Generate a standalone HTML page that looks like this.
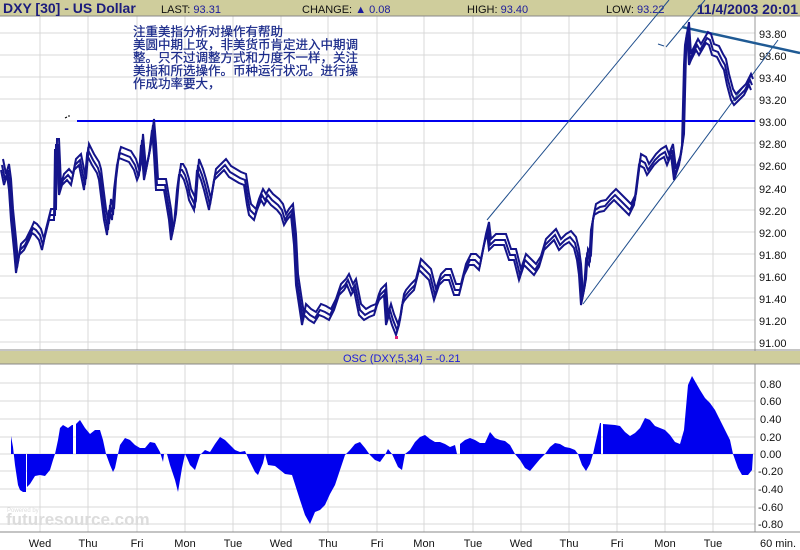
<!DOCTYPE html>
<html><head><meta charset="utf-8"><style>
body{margin:0;width:800px;height:550px;overflow:hidden;background:#fff;font-family:"Liberation Sans",Arial,sans-serif}
svg{display:block}
</style></head><body>
<svg width="800" height="550" xmlns="http://www.w3.org/2000/svg" font-family="Liberation Sans, Arial, sans-serif">
<rect width="800" height="550" fill="#fff"/>
<g stroke="#d8d8d8" stroke-width="1">
<path d="M40 16V350M88 16V350M137 16V350M185 16V350M233 16V350M281 16V350M328 16V350M377 16V350M424 16V350M473 16V350M521 16V350M569 16V350M617 16V350M665 16V350M713 16V350"/>
<path d="M0 33H755M0 55H755M0 77H755M0 99H755M0 121H755M0 143H755M0 165H755M0 188H755M0 210H755M0 232H755M0 254H755M0 276H755M0 298H755M0 320H755M0 342H755"/>
<path d="M40 365V532M88 365V532M137 365V532M185 365V532M233 365V532M281 365V532M328 365V532M377 365V532M424 365V532M473 365V532M521 365V532M569 365V532M617 365V532M665 365V532M713 365V532"/>
<path d="M0 383H755M0 401H755M0 419H755M0 437H755M0 454H755M0 471H755M0 489H755M0 507H755M0 524H755"/>
</g>
<line x1="755" y1="16" x2="755" y2="532" stroke="#999"/>
<rect x="0" y="0" width="800" height="16" fill="#cfcd9c"/>
<line x1="0" y1="16" x2="800" y2="16" stroke="#888"/>
<text x="3" y="13" font-size="14" font-weight="bold" fill="#1c1c7c">DXY [30] - US Dollar</text>
<text x="161" y="13" font-size="11" fill="#111">LAST: <tspan fill="#1c1c9c">93.31</tspan></text>
<text x="302" y="13" font-size="11" fill="#111">CHANGE: <tspan fill="#1c1c9c">▲ 0.08</tspan></text>
<text x="467" y="13" font-size="11" fill="#111">HIGH: <tspan fill="#1c1c9c">93.40</tspan></text>
<text x="606" y="13" font-size="11" fill="#111">LOW: <tspan fill="#1c1c9c">93.22</tspan></text>
<text x="798" y="14" font-size="14" font-weight="bold" fill="#1c1c7c" text-anchor="end">11/4/2003 20:01</text>
<g font-size="11" fill="#111">
<text x="759" y="38">93.80</text><text x="759" y="60">93.60</text><text x="759" y="82">93.40</text><text x="759" y="104">93.20</text><text x="759" y="126">93.00</text><text x="759" y="148">92.80</text><text x="759" y="170">92.60</text><text x="759" y="193">92.40</text><text x="759" y="215">92.20</text><text x="759" y="237">92.00</text><text x="759" y="259">91.80</text><text x="759" y="281">91.60</text><text x="759" y="303">91.40</text><text x="759" y="325">91.20</text><text x="759" y="347">91.00</text>
</g>
<g font-family="Liberation Sans, Noto Sans CJK SC, sans-serif" font-size="12.5" fill="#1a2a8a" stroke="#1a2a8a" stroke-width="0.25">
<text x="133" y="36">注重美指分析对操作有帮助</text>
<text x="133" y="49">美圆中期上攻，非美货币肯定进入中期调</text>
<text x="133" y="62">整。只不过调整方式和力度不一样，关注</text>
<text x="133" y="75">美指和所选操作。币种运行状况。进行操</text>
<text x="133" y="88">作成功率要大，</text>
</g>
<line x1="77" y1="121" x2="755" y2="121" stroke="#0000ee" stroke-width="2"/>
<path d="M65 118l2-1M68 116h2" stroke="#000" stroke-width="1"/>
<g stroke="#1f4e8c" stroke-width="1" fill="none">
<line x1="487" y1="220" x2="669" y2="0"/>
<line x1="583" y1="304" x2="778" y2="40"/>
<line x1="666" y1="47" x2="705" y2="0"/>
<line x1="658" y1="44" x2="664" y2="46"/>
</g>
<line x1="682" y1="27" x2="800" y2="53" stroke="#1f5a94" stroke-width="2.5"/>
<g fill="none" stroke="#14148a">
<polyline id="p" stroke-width="2" points="2,165 5,180 8,170 10,185 12,215 15,245 17,268 20,250 25,245 30,235 33,228 36,230 40,235 43,245 45,235 50,215 55,215 56,145 58,145 60,190 63,180 68,175 72,180 75,165 80,160 85,185 88,150 93,160 98,168 100,175 105,215 108,230 110,205 113,215 115,185 118,160 120,153 125,155 130,157 135,165 138,175 140,170 142,140 145,175 150,150 153,125 155,150 157,185 160,185 165,185 170,215 172,235 175,220 178,185 180,170 182,170 185,175 188,185 190,195 195,205 198,165 202,175 205,185 210,205 215,175 220,170 225,165 230,172 235,175 240,178 245,180 248,200 250,210 255,215 258,205 262,195 265,200 268,195 272,200 278,205 282,210 285,220 288,215 292,210 295,240 297,280 300,300 303,320 305,310 310,315 315,318 320,310 325,312 330,315 335,305 340,290 345,285 348,280 352,290 355,285 360,310 365,315 370,312 375,310 378,300 380,295 385,290 387,320 390,310 393,320 397,330 400,320 403,300 405,296 410,290 415,285 420,265 425,270 430,275 435,295 440,280 445,275 450,275 455,290 460,290 465,270 470,260 475,260 480,265 485,240 488,228 490,245 495,240 500,240 505,240 510,255 515,255 520,275 525,260 530,265 535,270 540,262 545,245 550,240 555,235 560,245 565,240 570,237 575,243 578,255 580,270 582,300 585,285 587,255 590,260 592,225 595,210 600,207 605,206 610,200 615,195 620,200 625,205 630,210 635,200 640,160 645,163 648,170 655,160 660,155 665,152 668,160 672,150 675,175 680,160 683,140 685,60 686,40 688,28 690,60 692,55 697,45 700,50 703,45 707,38 710,40 713,50 718,52 722,60 725,65 728,80 732,95 735,100 740,95 745,90 750,80 752,85"/>
<use href="#p" transform="translate(1,-6)" stroke-width="1.5"/>
<use href="#p" transform="translate(-1,5)" stroke-width="1.5"/>
</g>
<rect x="395" y="336" width="3" height="3" fill="#e0207a"/>
<line x1="0" y1="350" x2="800" y2="350" stroke="#888"/>
<rect x="0" y="351" width="800" height="13" fill="#cfcd9c"/>
<line x1="0" y1="364" x2="800" y2="364" stroke="#888"/>
<text x="343" y="362" font-size="11" fill="#1c1cdc">OSC (DXY,5,34) = -0.21</text>
<polygon fill="#0000ee" points="11,454 11,436 13,447 15,465 18,485 20,490 23,492 26,492 26,454 27,454 27,487 30,484 35,476 40,475 45,476 50,470 53,460 55,454 58,440 60,428 63,425 68,428 72,425 73,425 73,454 76,454 76,424 80,420 85,428 90,434 95,430 100,430 103,440 106,454 110,465 113,472 115,468 118,454 120,445 125,438 130,440 135,445 140,448 145,448 150,442 155,443 160,452 163,462 164,454 167,454 170,465 175,480 178,492 182,468 185,454 187,458 190,465 195,470 200,455 205,450 210,452 215,444 220,437 225,440 235,450 240,452 245,451 250,462 255,472 258,475 263,463 265,454 268,465 275,466 285,474 292,475 300,500 305,515 310,524 315,512 320,510 325,505 330,494 335,485 340,470 345,455 350,450 355,444 360,442 365,448 370,455 375,460 380,462 385,455 388,449 392,454 398,467 402,470 405,454 410,450 415,442 420,437 425,435 430,439 435,442 440,442 445,444 450,447 455,445 457,454 460,454 460,444 465,440 470,438 475,440 480,443 485,443 490,432 495,438 500,440 505,441 510,445 515,454 520,460 525,468 530,471 535,465 540,459 545,454 550,447 555,443 560,444 565,447 570,448 575,450 578,454 582,465 586,471 590,464 593,454 595,445 598,432 600,423 601,423 601,454 603,454 603,424 615,425 620,426 625,432 630,436 635,433 640,428 645,418 650,420 655,426 660,428 665,430 670,435 675,442 680,444 684,430 688,385 692,376 696,383 700,390 705,398 710,403 715,410 720,420 725,430 730,440 733,454 738,468 742,475 748,475 752,470 753,454"/>
<g font-size="11" fill="#111">
<text x="760" y="388">0.80</text><text x="760" y="405">0.60</text><text x="760" y="423">0.40</text><text x="760" y="441">0.20</text><text x="760" y="458">0.00</text><text x="758" y="475">-0.20</text><text x="758" y="493">-0.40</text><text x="758" y="511">-0.60</text><text x="758" y="528">-0.80</text>
</g>
<line x1="0" y1="532" x2="800" y2="532" stroke="#888"/>
<text x="6" y="525" font-size="17" fill="#dcdcdc" font-weight="bold">futuresource.com</text>
<text x="7" y="512" font-size="6" fill="#ddd">Powered by</text>
<g font-size="11" fill="#111" text-anchor="middle">
<text x="40" y="547">Wed</text><text x="88" y="547">Thu</text><text x="137" y="547">Fri</text><text x="185" y="547">Mon</text><text x="233" y="547">Tue</text><text x="281" y="547">Wed</text><text x="328" y="547">Thu</text><text x="377" y="547">Fri</text><text x="424" y="547">Mon</text><text x="473" y="547">Tue</text><text x="521" y="547">Wed</text><text x="569" y="547">Thu</text><text x="617" y="547">Fri</text><text x="665" y="547">Mon</text><text x="713" y="547">Tue</text>
</g>
<text x="760" y="547" font-size="11" fill="#111">60 min.</text>
</svg>
</body></html>
